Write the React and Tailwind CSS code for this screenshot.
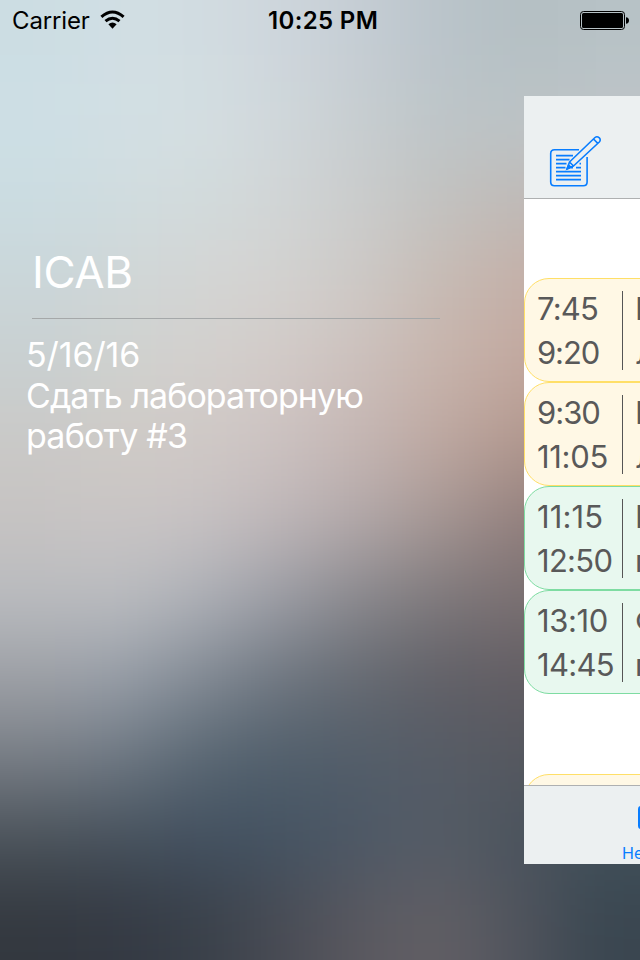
const PALETTE = [
  ['#ccdde3', '#d1dfe4', '#d2dce1', '#ced6dc', '#c5cdd4', '#bac4ca', '#b4bfc3', '#b7c2c6'],
  ['#cddfe5', '#d3dfe4', '#d4dfe2', '#d0d7db', '#c7cdd0', '#bdc5c8', '#bcc3c6', '#bfc5c8'],
  ['#cbdce1', '#d0dcdf', '#d3dbdc', '#d1d5d6', '#cacccc', '#c2c2c0', '#bfbab7', '#bcb5b2'],
  ['#cad6d9', '#d0d6d7', '#d3d5d4', '#d3d2d0', '#cdc9c6', '#c7bbb4', '#c5b0a8', '#c0a9a0'],
  ['#c9d0d1', '#cfd1cf', '#d3d0cd', '#d2cac7', '#ccc0bc', '#c7b4ac', '#c3a9a0', '#bda198'],
  ['#cac9c7', '#cfcac6', '#d0c9c6', '#ccc2c1', '#c5b6b3', '#bea8a1', '#b3998f', '#ad9189'],
  ['#c6c3c2', '#c9c5c5', '#c7c2c3', '#beb6b8', '#b2a8a9', '#a59693', '#93807e', '#8c7877'],
  ['#b9bbbf', '#babcc0', '#adb0b7', '#9a9ca4', '#88878c', '#7d787b', '#796f71', '#746a6c'],
  ['#9c9fa5', '#969da7', '#818993', '#6d757f', '#646971', '#605f66', '#615d63', '#605a60'],
  ['#767c84', '#6d7782', '#586672', '#505e6b', '#525d69', '#565c66', '#55585f', '#50535b'],
  ['#4a525a', '#46515c', '#425060', '#445362', '#4d5866', '#545c66', '#4b535d', '#40505a'],
  ['#33383f', '#343943', '#394049', '#484b54', '#5a5960', '#625f65', '#50545d', '#3a4650'],
];

const clamp = (n, max) => Math.max(0, Math.min(max, n));

function Backdrop() {
  const cells = [];
  for (let r = -2; r < 14; r++) {
    for (let c = -2; c < 10; c++) {
      cells.push(
        <rect key={`${r}:${c}`} x={c * 80} y={r * 80} width="81" height="81" fill={PALETTE[clamp(r, 11)][clamp(c, 7)]} />,
      );
    }
  }
  return (
    <svg className="absolute inset-0 h-[960px] w-[640px]" viewBox="0 0 640 960">
      <defs>
        <filter id="soften" filterUnits="userSpaceOnUse" x="-160" y="-160" width="960" height="1280" colorInterpolationFilters="sRGB">
          <feGaussianBlur stdDeviation="38" />
        </filter>
      </defs>
      <g filter="url(#soften)">{cells}</g>
    </svg>
  );
}

function StatusBar() {
  return (
    <header className="flex h-10 w-full items-center text-[24px] leading-10 text-black">
      <div className="flex w-[268px] items-center pl-3">
        <span className="w-[88px] pt-0.5 leading-[38px] tracking-[-0.15px]">Carrier</span>
        <svg className="h-5 w-[26px]" viewBox="0 0 26 20">
          <g fill="none" stroke="#000" strokeWidth="3">
            <path d="M1.4 6.9Q12.5 -3 23.6 6.9" />
            <path d="M5.5 11.2Q12.5 5.2 19.5 11.2" />
          </g>
          <path d="M8.4 14.2Q12.5 10.8 16.6 14.2L12.5 18.8Z" />
        </svg>
      </div>
      <span className="w-[312px] pt-0.5 font-semibold leading-[38px] tracking-[0.35px]">10:25 PM</span>
      <svg className="h-5 w-[50px]" viewBox="0 0 50 20">
        <rect x="0.5" y="1.5" width="44" height="18" rx="3" fill="none" stroke="#000" />
        <rect x="2" y="3" width="41" height="15" rx="1.5" />
        <path d="M46 7.2Q49 7.4 49 10.5T46 13.8Z" />
      </svg>
    </header>
  );
}

function NoteIcon() {
  return (
    <svg className="h-[54px] w-[54px]" viewBox="0 0 54 54" fill="none" stroke="#087dff" strokeWidth="1.6">
      <path d="M30 14.7H5.5Q1.7 14.7 1.7 18.5V47Q1.7 50.8 5.5 50.8H34.3Q38.1 50.8 38.1 47V22" />
      <path strokeWidth="1.9" d="M7 20.6H24M7 24.6H20.5M7 28.6H17.5M7 32.6H16.5M27 32.6H32M7 36.6H32M7 40.6H32M7 44.6H32M30.5 28.6H32M22 32.6H24" />
      <path d="M18 34L20.5 27L46 2.5Q48 .8 50.3 2.8Q52.1 5 50.3 7L24.5 31Z M44.5 4L48.8 8.4M20.5 27L24.5 31" strokeLinejoin="round" />
      <path d="M18 34L19.6 30L22 32.2Z" fill="#087dff" />
    </svg>
  );
}

const YELLOW = 'border-[#ffdf67] bg-[#fff8e5]';
const GREEN = 'border-[#7edca2] bg-[#e8f8ef]';

const LESSONS = [
  { from: '7:45', to: '9:20', title: 'В', room: 'Л', tone: YELLOW, fromFit: 'tracking-[-0.8px]', toFit: 'tracking-[-1.1px]' },
  { from: '9:30', to: '11:05', title: 'В', room: 'Л', tone: YELLOW, fromFit: 'tracking-[-1px]', toFit: 'tracking-[-0.3px]' },
  { from: '11:15', to: '12:50', title: 'В', room: 'п', tone: GREEN, fromFit: 'tracking-[0.1px]', toFit: 'tracking-[-0.7px]' },
  { from: '13:10', to: '14:45', title: 'Ф', room: 'п', tone: GREEN, fromFit: 'tracking-[-0.4px]', toFit: 'tracking-[-0.7px]' },
];

function Lesson({ from, to, title, room, tone, fromFit, toFit }) {
  return (
    <div className={`flex h-[104px] w-[500px] shrink-0 rounded-[25px] border-[1.5px] pl-3 text-[31px] leading-[44px] text-[#595959] ${tone}`}>
      <div className="w-[85px] shrink-0 whitespace-nowrap pt-2">
        <div className={fromFit}>{from}</div>
        <div className={toFit}>{to}</div>
      </div>
      <div className="mt-3 h-[79px] w-px shrink-0 bg-[#555]" />
      <div className="pl-3 pt-2">
        <div>{title}</div>
        <div>{room}</div>
      </div>
    </div>
  );
}

function SchedulePanel() {
  return (
    <main className="mt-14 flex h-[768px] w-[116px] shrink-0 flex-col overflow-hidden bg-white">
      <div className="h-[103px] shrink-0 border-b border-[#aeb0b1] bg-[#ecf0f1] pl-[25px] pt-[39px]">
        <NoteIcon />
      </div>
      <div className="flex h-[586px] shrink-0 flex-col overflow-hidden pt-[79px]">
        {LESSONS.map((lesson) => (
          <Lesson key={lesson.from} {...lesson} />
        ))}
        <div className="mt-20 h-[104px] w-[500px] shrink-0 rounded-[25px] border-[1.5px] border-[#ffdf67] bg-[#fff8e5]" />
      </div>
      <div className="h-[79px] shrink-0 border-t border-[#aeb0b1] bg-[#ecf0f1]">
        <div className="ml-[114px] mt-5 h-[23px] w-[22px] rounded-[3px] bg-[#087dff]" />
        <div className="ml-[97px] mt-[14px] whitespace-nowrap pl-px text-[16px] leading-5 text-[#087dff]">Неделя</div>
      </div>
    </main>
  );
}

export default function App() {
  return (
    <div className="relative h-[960px] w-[640px] overflow-hidden bg-[#333842] font-['Inter','Liberation_Sans',sans-serif]">
      <Backdrop />
      <div className="relative">
        <StatusBar />
        <div className="flex">
          <aside className="w-[524px] shrink-0 pt-[205px] text-white">
            <h1 className="pl-8 text-[44px] leading-[54px] tracking-[-0.4px]">ICAB</h1>
            <div className="ml-8 mt-[19px] h-px w-[408px] bg-[#a5a8a9]" />
            <div className="ml-[26px] mt-4 whitespace-nowrap text-[34px] leading-[40.5px]">
              <p className="tracking-[-0.1px]">5/16/16</p>
              <p className="tracking-[-0.95px]">Сдать лабораторную</p>
              <p className="tracking-[-0.8px]">работу #3</p>
            </div>
          </aside>
          <SchedulePanel />
        </div>
      </div>
    </div>
  );
}
